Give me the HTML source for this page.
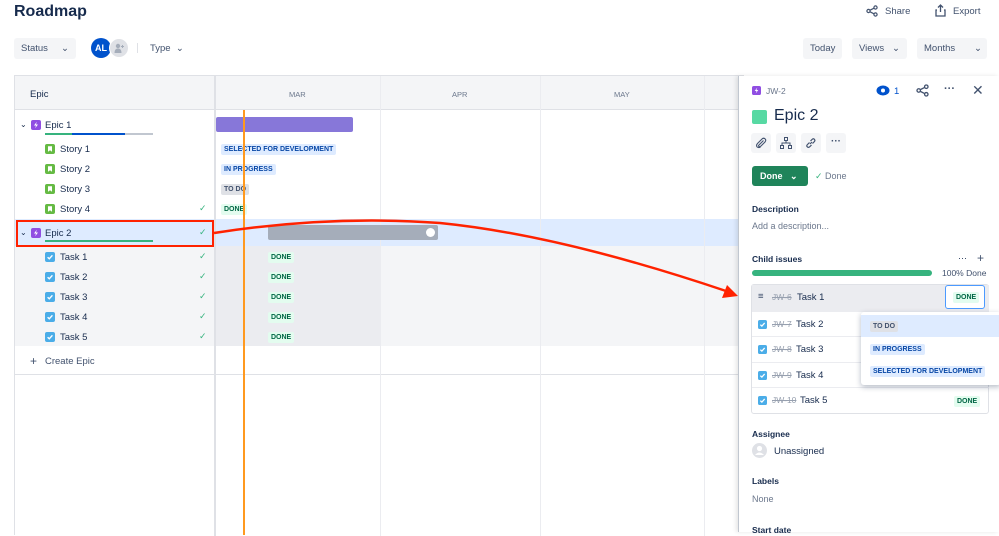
<!DOCTYPE html>
<html><head><meta charset="utf-8"><style>
*{box-sizing:border-box;margin:0;padding:0}
body{width:999px;height:532px;overflow:hidden;background:#fff;font-family:"Liberation Sans",sans-serif;color:#172b4d;position:relative;font-size:10px}
.a{position:absolute}
.btn{position:absolute;background:#f4f5f7;border-radius:3px;height:21px;font-size:9.5px;color:#42526e;line-height:21px;padding-left:7px}
.lz{position:absolute;font-size:9.5px;color:#172b4d}
.lz svg{position:absolute;left:-15px;top:0}
.lo{position:absolute;font-size:7px;font-weight:bold;padding:1px 3px;border-radius:2px;line-height:9px}
.done{background:#e3fcef;color:#006644}
.blue{background:#deebff;color:#0747a6}
.grey{background:#dfe1e6;color:#42526e}
.ck{position:absolute;left:199px;color:#36b37e;font-size:9px}
.sec{position:absolute;left:752px;font-size:8.5px;font-weight:bold;color:#172b4d}
.row{position:absolute;left:752px;width:237px;height:26px;border-top:1px solid #ebecf0;font-size:9.5px}
.row .cb{position:absolute;left:6px;top:8px}
.row s{position:absolute;left:20px;top:7px;color:#97a0af;font-size:8.5px}
.tb{position:absolute;top:133px;width:20px;height:20px;background:#f4f5f7;border-radius:3px}
.tb svg{position:absolute;left:4px;top:4px}
</style></head><body>
<svg width="0" height="0" style="position:absolute">
<defs>
<symbol id="ep" viewBox="0 0 10 10"><rect width="10" height="10" rx="2" fill="#904ee2"/><path d="M5.8 1.8 L3 5.5 H5 L4.2 8.2 L7 4.5 H5 Z" fill="#fff"/></symbol>
<symbol id="st" viewBox="0 0 10 10"><rect width="10" height="10" rx="2" fill="#65ba43"/><path d="M3 2.3 H7 V7.8 L5 6.3 L3 7.8 Z" fill="#fff"/></symbol>
<symbol id="tk" viewBox="0 0 10 10"><rect width="10" height="10" rx="2" fill="#4bade8"/><path d="M2.6 5.2 L4.3 6.8 L7.4 3.3" fill="none" stroke="#fff" stroke-width="1.4"/></symbol>
</defs></svg>
<div class="a" style="left:14px;top:3px;font-size:16px;font-weight:bold;color:#172b4d">Roadmap</div>
<div class="btn" style="left:14px;top:38px;width:62px">Status<span class="a" style="left:47px;top:0">⌄</span></div>
<div class="a" style="left:91px;top:38px;width:20px;height:20px;border-radius:50%;background:#0052cc;color:#fff;font-size:9px;font-weight:bold;line-height:20px;text-align:center">AL</div>
<div class="a" style="left:109px;top:38px;width:20px;height:20px;border-radius:50%;background:#dfe1e6;border:1.5px solid #fff"><svg class="a" style="left:4px;top:4px" width="11" height="11" viewBox="0 0 11 11"><circle cx="4" cy="3" r="2.2" fill="#a5adba"/><path d="M0.5 10 Q0.5 5.5 4 5.5 Q7.5 5.5 7.5 10 Z" fill="#a5adba"/><path d="M8.5 2 V5 M7 3.5 H10" stroke="#a5adba" stroke-width="1"/></svg></div>
<div class="a" style="left:137px;top:43px;width:1px;height:10px;background:#dfe1e6"></div>
<div class="a" style="left:150px;top:43px;font-size:9.5px;color:#42526e">Type &nbsp;⌄</div>
<svg class="a" style="left:866px;top:5px" width="12" height="12" viewBox="0 0 12 12"><circle cx="2.5" cy="6" r="1.6" fill="none" stroke="#42526e" stroke-width="1.2"/><circle cx="9.5" cy="2.5" r="1.6" fill="none" stroke="#42526e" stroke-width="1.2"/><circle cx="9.5" cy="9.5" r="1.6" fill="none" stroke="#42526e" stroke-width="1.2"/><path d="M4 5.2 L8 3.2 M4 6.8 L8 8.8" stroke="#42526e" stroke-width="1.2"/></svg>
<div class="a" style="left:885px;top:6px;font-size:9.5px;color:#42526e">Share</div>
<svg class="a" style="left:935px;top:4px" width="11" height="13" viewBox="0 0 11 13"><path d="M5.5 1 V8 M3 3.5 L5.5 1 L8 3.5 M2 6 H1 V12 H10 V6 H9" fill="none" stroke="#42526e" stroke-width="1.3"/></svg>
<div class="a" style="left:953px;top:6px;font-size:9.5px;color:#42526e">Export</div>
<div class="btn" style="left:803px;top:38px;width:39px">Today</div>
<div class="btn" style="left:852px;top:38px;width:55px">Views<span class="a" style="left:40px">⌄</span></div>
<div class="btn" style="left:917px;top:38px;width:70px">Months<span class="a" style="left:57px">⌄</span></div>

<div class="a" style="left:14px;top:75px;width:730px;height:460px;border-left:1px solid #dfe1e6;border-top:1px solid #dfe1e6"></div>
<div class="a" style="left:15px;top:76px;width:724px;height:34px;background:#f4f5f7;border-bottom:1px solid #dfe1e6"></div>
<div class="a" style="left:30px;top:89px;font-size:9.5px">Epic</div>
<div class="a" style="left:289px;top:90px;font-size:7.5px;color:#6b778c">MAR</div>
<div class="a" style="left:452px;top:90px;font-size:7.5px;color:#6b778c">APR</div>
<div class="a" style="left:614px;top:90px;font-size:7.5px;color:#6b778c">MAY</div>
<div class="a" style="left:15px;top:219px;width:724px;height:27px;background:#deebff"></div>
<div class="a" style="left:15px;top:246px;width:724px;height:100px;background:#f4f5f7"></div>
<div class="a" style="left:215px;top:246px;width:165px;height:100px;background:#ebecf0"></div>
<div class="a" style="left:15px;top:374px;width:724px;height:1px;background:#dfe1e6"></div>
<div class="a" style="left:214px;top:76px;width:2px;height:460px;background:#dfe1e6"></div>
<div class="a" style="left:380px;top:76px;width:1px;height:460px;background:#ebecf0"></div>
<div class="a" style="left:540px;top:76px;width:1px;height:460px;background:#ebecf0"></div>
<div class="a" style="left:704px;top:76px;width:1px;height:460px;background:#ebecf0"></div>

<div class="a" style="left:20px;top:120px;font-size:8px">⌄</div>
<div class="lz" style="left:45px;top:120px"><svg width="10" height="10" style="left:-14px"><use href="#ep"/></svg>Epic 1</div>
<div class="a" style="left:45px;top:133px;width:108px;height:2px;background:#c1c7d0"></div>
<div class="a" style="left:45px;top:133px;width:27px;height:2px;background:#36b37e"></div>
<div class="a" style="left:72px;top:133px;width:53px;height:2px;background:#0052cc"></div>
<div class="lz" style="left:60px;top:144px"><svg width="10" height="10"><use href="#st"/></svg>Story 1</div>
<div class="lz" style="left:60px;top:164px"><svg width="10" height="10"><use href="#st"/></svg>Story 2</div>
<div class="lz" style="left:60px;top:184px"><svg width="10" height="10"><use href="#st"/></svg>Story 3</div>
<div class="lz" style="left:60px;top:204px"><svg width="10" height="10"><use href="#st"/></svg>Story 4</div><span class="ck" style="top:203px">✓</span>
<div class="a" style="left:20px;top:228px;font-size:8px">⌄</div>
<div class="lz" style="left:45px;top:228px"><svg width="10" height="10" style="left:-14px"><use href="#ep"/></svg>Epic 2</div><span class="ck" style="top:227px">✓</span>
<div class="a" style="left:45px;top:240px;width:108px;height:2px;background:#36b37e"></div>
<div class="lz" style="left:60px;top:252px"><svg width="10" height="10"><use href="#tk"/></svg>Task 1</div><span class="ck" style="top:251px">✓</span>
<div class="lz" style="left:60px;top:272px"><svg width="10" height="10"><use href="#tk"/></svg>Task 2</div><span class="ck" style="top:271px">✓</span>
<div class="lz" style="left:60px;top:292px"><svg width="10" height="10"><use href="#tk"/></svg>Task 3</div><span class="ck" style="top:291px">✓</span>
<div class="lz" style="left:60px;top:312px"><svg width="10" height="10"><use href="#tk"/></svg>Task 4</div><span class="ck" style="top:311px">✓</span>
<div class="lz" style="left:60px;top:332px"><svg width="10" height="10"><use href="#tk"/></svg>Task 5</div><span class="ck" style="top:331px">✓</span>
<div class="a" style="left:30px;top:354px;font-size:12px;color:#42526e">+</div>
<div class="lz" style="left:45px;top:356px;color:#42526e">Create Epic</div>

<div class="a" style="left:216px;top:117px;width:137px;height:15px;background:#8777d9;border-radius:2px"></div>
<div class="lo blue" style="left:221px;top:144px">SELECTED FOR DEVELOPMENT</div>
<div class="lo blue" style="left:221px;top:164px">IN PROGRESS</div>
<div class="lo grey" style="left:221px;top:184px">TO DO</div>
<div class="lo done" style="left:221px;top:204px">DONE</div>
<div class="a" style="left:268px;top:225px;width:170px;height:15px;background:#a5adba;border-radius:2px"></div>
<div class="a" style="left:426px;top:228px;width:9px;height:9px;border-radius:50%;background:#fff"></div>
<div class="lo done" style="left:268px;top:252px">DONE</div>
<div class="lo done" style="left:268px;top:272px">DONE</div>
<div class="lo done" style="left:268px;top:292px">DONE</div>
<div class="lo done" style="left:268px;top:312px">DONE</div>
<div class="lo done" style="left:268px;top:332px">DONE</div>
<div class="a" style="left:243px;top:110px;width:1.5px;height:425px;background:#ff991f"></div>

<div class="a" style="left:738px;top:76px;width:261px;height:456px;background:#fff;border-left:1px solid #c1c7d0;box-shadow:-2px 0 4px rgba(0,0,0,.1)"></div>
<svg class="a" style="left:752px;top:86px" width="9" height="9"><use href="#ep"/></svg>
<div class="a" style="left:766px;top:86px;font-size:8.5px;color:#6b778c">JW-2</div>
<svg class="a" style="left:876px;top:85px" width="14" height="11" viewBox="0 0 14 11"><ellipse cx="7" cy="5.5" rx="6.5" ry="5" fill="#0052cc"/><circle cx="7" cy="5.5" r="2" fill="#fff"/></svg>
<div class="a" style="left:894px;top:86px;font-size:9.5px;color:#0052cc">1</div>
<svg class="a" style="left:916px;top:84px" width="13" height="13" viewBox="0 0 12 12"><circle cx="2.5" cy="6" r="1.6" fill="none" stroke="#42526e" stroke-width="1.2"/><circle cx="9.5" cy="2.5" r="1.6" fill="none" stroke="#42526e" stroke-width="1.2"/><circle cx="9.5" cy="9.5" r="1.6" fill="none" stroke="#42526e" stroke-width="1.2"/><path d="M4 5.2 L8 3.2 M4 6.8 L8 8.8" stroke="#42526e" stroke-width="1.2"/></svg>
<div class="a" style="left:944px;top:83px;font-size:11px;color:#42526e;font-weight:bold">···</div>
<div class="a" style="left:972px;top:82px;font-size:14px;color:#42526e">✕</div>
<div class="a" style="left:752px;top:110px;width:15px;height:14px;border-radius:2px;background:#57d9a3"></div>
<div class="a" style="left:774px;top:107px;font-size:16px">Epic 2</div>
<div class="tb" style="left:751px"><svg width="12" height="12" viewBox="0 0 12 12"><path d="M8.5 3.5 L4 8 Q3 9 4 9.5 Q5 10 6 9 L10 5 Q11.5 3 10 1.8 Q8.5 0.6 7 2 L2.5 6.5 Q0.8 8.5 2.2 10 Q3.8 11.3 5.5 9.8" fill="none" stroke="#42526e" stroke-width="1.1"/></svg></div>
<div class="tb" style="left:776px"><svg width="12" height="12" viewBox="0 0 12 12"><rect x="4.5" y="0.5" width="3" height="3" fill="none" stroke="#42526e"/><rect x="0.5" y="8.5" width="3" height="3" fill="none" stroke="#42526e"/><rect x="8.5" y="8.5" width="3" height="3" fill="none" stroke="#42526e"/><path d="M6 3.5 V6 M2 8.5 V6 H10 V8.5" fill="none" stroke="#42526e"/></svg></div>
<div class="tb" style="left:801px"><svg width="12" height="12" viewBox="0 0 12 12"><path d="M5 7 L7 5 M4.5 5.5 L2.5 7.5 Q1 9 2.5 10 Q3.5 11 5 9.5 L6.5 8 M5.5 4 L7 2.5 Q8.5 1 9.5 2.5 Q10.5 3.5 9 5 L7.5 6.5" fill="none" stroke="#42526e" stroke-width="1.2"/></svg></div>
<div class="tb" style="left:826px;font-weight:bold;text-align:center;color:#42526e;line-height:18px">···</div>
<div class="a" style="left:752px;top:166px;width:56px;height:20px;background:#1f845a;border-radius:3px;color:#fff;font-weight:bold;font-size:9px;line-height:20px;padding-left:8px">Done &nbsp;&nbsp;⌄</div>
<div class="a" style="left:815px;top:171px;font-size:9px;color:#6b778c"><span style="color:#36b37e">✓</span> Done</div>
<div class="sec" style="top:204px">Description</div>
<div class="a" style="left:752px;top:221px;font-size:9px;color:#6b778c">Add a description...</div>
<div class="sec" style="top:254px">Child issues</div>
<div class="a" style="left:958px;top:253px;font-size:9px">···</div>
<div class="a" style="left:977px;top:251px;font-size:12px;color:#42526e">+</div>
<div class="a" style="left:752px;top:270px;width:180px;height:6px;border-radius:3px;background:#36b37e"></div>
<div class="a" style="left:942px;top:268px;font-size:8.5px;color:#42526e">100% Done</div>
<div class="a" style="left:751px;top:284px;width:238px;height:130px;border:1px solid #dfe1e6;border-radius:3px"></div>
<div class="row" style="top:285px;background:#ebecf0;border-top:0"><span class="a" style="left:6px;top:6px;color:#42526e">≡</span><s>JW-6</s><span class="a" style="left:45px;top:7px">Task 1</span>
<div class="a" style="left:193px;top:0;width:40px;height:24px;border:1.5px solid #4c9aff;border-radius:3px;background:#fff"><span class="lo done" style="left:7px;top:6px">DONE</span></div></div>
<div class="row" style="top:311px"><svg class="cb" width="9" height="9"><use href="#tk"/></svg><s>JW-7</s><span class="a" style="left:44px;top:7px">Task 2</span></div>
<div class="row" style="top:336px"><svg class="cb" width="9" height="9"><use href="#tk"/></svg><s>JW-8</s><span class="a" style="left:44px;top:7px">Task 3</span></div>
<div class="row" style="top:362px"><svg class="cb" width="9" height="9"><use href="#tk"/></svg><s>JW-9</s><span class="a" style="left:44px;top:7px">Task 4</span></div>
<div class="row" style="top:387px"><svg class="cb" width="9" height="9"><use href="#tk"/></svg><s>JW-10</s><span class="a" style="left:48px;top:7px">Task 5</span><span class="lo done" style="left:202px;top:8px">DONE</span></div>
<div class="a" style="left:861px;top:312px;width:140px;height:73px;background:#fff;border-radius:3px;box-shadow:0 2px 6px rgba(9,30,66,.3)">
<div class="a" style="left:0;top:3px;width:140px;height:22px;background:#deebff"></div>
<span class="lo grey" style="left:9px;top:9px">TO DO</span>
<span class="lo blue" style="left:9px;top:32px">IN PROGRESS</span>
<span class="lo blue" style="left:9px;top:54px">SELECTED FOR DEVELOPMENT</span></div>
<div class="sec" style="top:429px">Assignee</div>
<svg class="a" style="left:752px;top:443px" width="15" height="15" viewBox="0 0 15 15"><circle cx="7.5" cy="7.5" r="7.5" fill="#dfe1e6"/><circle cx="7.5" cy="5.5" r="2.6" fill="#fff"/><path d="M3 12 Q7.5 7 12 12" fill="#fff"/></svg>
<div class="a" style="left:774px;top:446px;font-size:9.5px">Unassigned</div>
<div class="sec" style="top:476px">Labels</div>
<div class="a" style="left:752px;top:494px;font-size:9px;color:#6b778c">None</div>
<div class="sec" style="top:525px">Start date</div>

<div class="a" style="left:16px;top:220px;width:198px;height:27px;border:2.5px solid #ff2200"></div>
<svg class="a" style="left:0;top:0" width="999" height="532"><path d="M214 233 Q330 215 440 223 Q560 235 726 291" fill="none" stroke="#ff2200" stroke-width="2.5"/><polygon points="738,296 722,298 727,285" fill="#ff2200"/></svg>
</body></html>
